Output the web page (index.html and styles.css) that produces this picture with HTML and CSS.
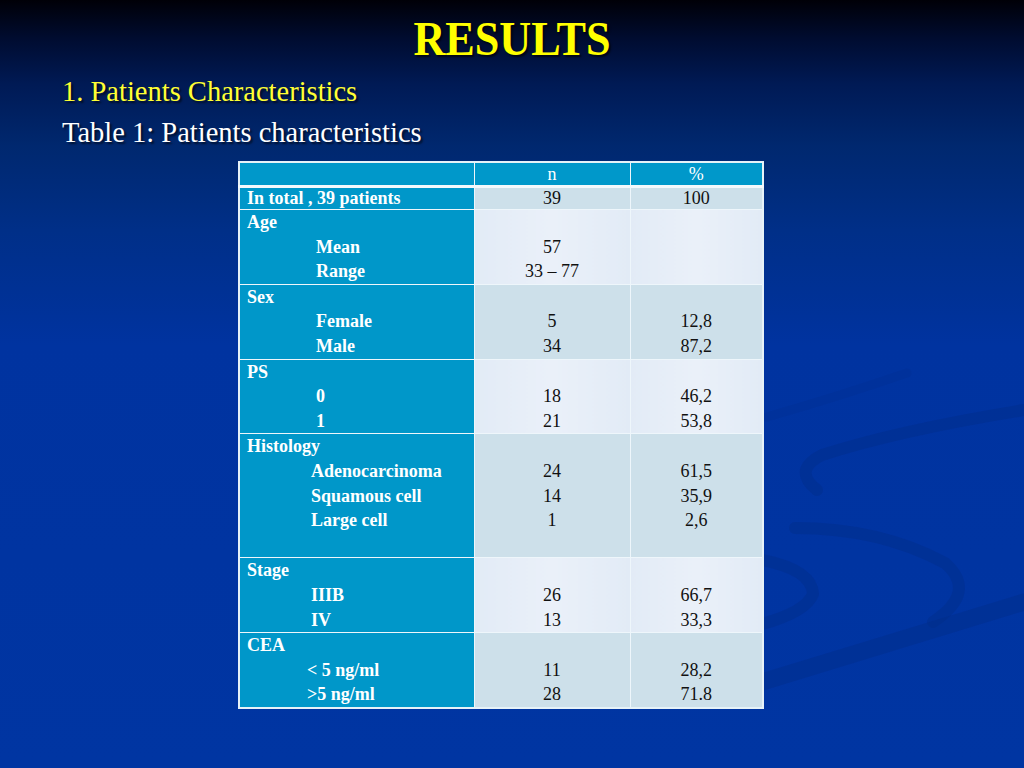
FILE: index.html
```html
<!DOCTYPE html>
<html lang="en">
<head>
<meta charset="utf-8">
<title>Results</title>
<link rel="stylesheet" href="styles.css">
</head>
<body>
<div class="slide">
  <svg class="swirl" width="1024" height="768" viewBox="0 0 1024 768" aria-hidden="true">
    <path class="faint" d="M767,417 Q840,396 907,373"/>
    <path d="M817,490 Q792,470 822,455 Q900,430 1024,410"/>
    <path d="M795,528 Q880,528 945,563 Q978,592 933,622"/>
    <path d="M762,560 Q812,570 813,594 Q806,612 762,624"/>
    <path class="wide" d="M762,682 Q900,640 1024,602"/>
  </svg>
  <div class="content">
    <h1 class="title">RESULTS</h1>
    <p class="subtitle">1. Patients Characteristics</p>
    <p class="caption">Table 1: Patients characteristics</p>
    <table class="data">
      <colgroup>
        <col class="c1"><col class="c2"><col class="c3">
      </colgroup>
      <thead>
        <tr class="head"><th></th><th>n</th><th>%</th></tr>
      </thead>
      <tbody>
        <tr class="total dark">
          <td class="lab"><div class="ln main">In total , 39 patients</div></td>
          <td><div class="ln">39</div></td>
          <td><div class="ln">100</div></td>
        </tr>
        <tr class="light">
          <td class="lab"><div class="ln main">Age</div><div class="ln i1">Mean</div><div class="ln i1">Range</div></td>
          <td><div class="ln"></div><div class="ln">57</div><div class="ln">33 – 77</div></td>
          <td><div class="ln"></div><div class="ln"></div><div class="ln"></div></td>
        </tr>
        <tr class="dark">
          <td class="lab"><div class="ln main">Sex</div><div class="ln i1">Female</div><div class="ln i1">Male</div></td>
          <td><div class="ln"></div><div class="ln">5</div><div class="ln">34</div></td>
          <td><div class="ln"></div><div class="ln">12,8</div><div class="ln">87,2</div></td>
        </tr>
        <tr class="light">
          <td class="lab"><div class="ln main">PS</div><div class="ln i1">0</div><div class="ln i1">1</div></td>
          <td><div class="ln"></div><div class="ln">18</div><div class="ln">21</div></td>
          <td><div class="ln"></div><div class="ln">46,2</div><div class="ln">53,8</div></td>
        </tr>
        <tr class="dark">
          <td class="lab"><div class="ln main">Histology</div><div class="ln i2">Adenocarcinoma</div><div class="ln i2">Squamous cell</div><div class="ln i2">Large cell</div><div class="ln"></div></td>
          <td><div class="ln"></div><div class="ln">24</div><div class="ln">14</div><div class="ln">1</div><div class="ln"></div></td>
          <td><div class="ln"></div><div class="ln">61,5</div><div class="ln">35,9</div><div class="ln">2,6</div><div class="ln"></div></td>
        </tr>
        <tr class="light">
          <td class="lab"><div class="ln main">Stage</div><div class="ln i2">IIIB</div><div class="ln i2">IV</div></td>
          <td><div class="ln"></div><div class="ln">26</div><div class="ln">13</div></td>
          <td><div class="ln"></div><div class="ln">66,7</div><div class="ln">33,3</div></td>
        </tr>
        <tr class="dark">
          <td class="lab"><div class="ln main">CEA</div><div class="ln i3">&lt; 5 ng/ml</div><div class="ln i3">&gt;5 ng/ml</div></td>
          <td><div class="ln"></div><div class="ln">11</div><div class="ln">28</div></td>
          <td><div class="ln"></div><div class="ln">28,2</div><div class="ln">71.8</div></td>
        </tr>
      </tbody>
    </table>
  </div>
</div>
</body>
</html>
```
FILE: styles.css
```css
html, body {
  margin: 0;
  padding: 0;
}

body {
  width: 1024px;
  height: 768px;
  overflow: hidden;
  background: #0035a0;
}

.slide {
  position: relative;
  width: 1024px;
  height: 768px;
  background: linear-gradient(to bottom,
    #000007 0%,
    #000c30 5%,
    #001a55 11%,
    #00286f 19%,
    #002f88 30%,
    #0033a0 45%,
    #0035a2 100%);
  font-family: "Liberation Serif", "Times New Roman", serif;
}

.swirl {
  position: absolute;
  left: 0;
  top: 0;
  z-index: 0;
}

.swirl path {
  fill: none;
  stroke: #002c88;
  stroke-width: 12;
  stroke-linecap: round;
  opacity: 0.4;
}

.swirl path.faint {
  opacity: 0.2;
  stroke-width: 9;
}

.swirl path.wide {
  stroke-width: 17;
}

.content {
  position: relative;
  z-index: 1;
  padding-top: 12px;
}

.title {
  margin: 0;
  text-align: center;
  font-family: "Liberation Serif", "Times New Roman", serif;
  font-size: 48px;
  line-height: 54px;
  font-weight: bold;
  color: #ffff00;
  transform: scaleX(0.92);
  text-shadow: 2px 2px 2px rgba(0, 0, 0, 0.7);
}

.subtitle,
.caption {
  margin: 0;
  padding-left: 62px;
  font-family: "Liberation Serif", "Times New Roman", serif;
  font-size: 28.5px;
  line-height: 41px;
  font-weight: normal;
  text-shadow: 2px 2px 2px rgba(0, 0, 0, 0.6);
}

.subtitle {
  margin-top: 5px;
  color: #ffff33;
}

.caption {
  color: #ffffff;
}

.data {
  margin: 8px 0 0 238px;
  width: 524px;
  border-collapse: collapse;
  table-layout: fixed;
  border: 2px solid #e6f2f8;
  font-family: "Liberation Serif", "Times New Roman", serif;
  font-size: 18px;
  color: #111111;
}

.c1 { width: 235px; }
.c2 { width: 156px; }
.c3 { width: 133px; }

.data th,
.data td {
  padding: 0;
  border: 1px solid #eef6fb;
  vertical-align: top;
}

.head th {
  height: 22px;
  background: #0098ca;
  color: #ffffff;
  font-weight: normal;
  line-height: 22px;
  text-align: center;
  border-bottom: 3px solid #f4f9fc;
}

.data td {
  text-align: center;
}

.data td.lab {
  background: #0097c9;
  color: #ffffff;
  font-weight: bold;
  text-align: left;
}

.dark td {
  background: #cde0ea;
}

.light td {
  background: linear-gradient(to right, #e2ebf6, #eaf0f9 50%, #e2ebf6);
}

.ln {
  height: 24.6px;
  line-height: 24.6px;
  white-space: nowrap;
}

.total .ln {
  height: 21px;
  line-height: 21px;
}

.ln.main { padding-left: 7px; }
.ln.i1 { padding-left: 76px; }
.ln.i2 { padding-left: 71px; }
.ln.i3 { padding-left: 67px; }
```
